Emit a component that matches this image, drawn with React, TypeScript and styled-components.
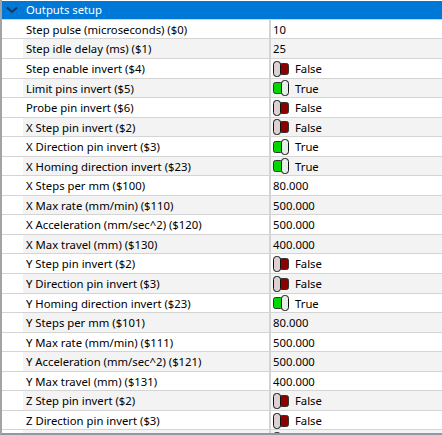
import { FC } from 'react';
import styled, { createGlobalStyle } from 'styled-components';

const GlobalStyle = createGlobalStyle`
  html, body {
    margin: 0;
    padding: 0;
    background: #fff;
  }
`;

const Frame = styled.div`
  box-sizing: border-box;
  width: 442px;
  height: 435px;
  padding-top: 1px;
  overflow: hidden;
  background: #fff;
  border-left: 2px solid #a3a3a3;
  border-bottom: 2px solid #8f98a3;
  font-family: 'Noto Sans', 'Open Sans', sans-serif;
  font-size: 11.3px;
  color: #000;
`;

const Viewport = styled.div`
  height: 432px;
  overflow: hidden;
`;

const Header = styled.div`
  display: flex;
  align-items: center;
  height: 17.9px;
  background: #0078d7;
  color: #fff;
  border-bottom: 1px solid #d4d4d4;
`;

const Chevron = styled.svg`
  width: 12px;
  height: 8px;
  margin-left: 4px;
  flex: none;
`;

const HeaderTitle = styled.span`
  margin-left: 8px;
`;

const Row = styled.div<{ $shaded: boolean }>`
  box-sizing: border-box;
  display: grid;
  grid-template-columns: 21px 246px 1fr;
  height: 19.55px;
  border-bottom: 1px solid #d4d4d4;
  line-height: 17.5px;
  background: ${({ $shaded }) =>
    $shaded ? 'linear-gradient(to right, #fff 21px, #f3f3f3 21px)' : '#fff'};
`;

const NameCell = styled.div`
  grid-column: 2;
  padding: 1px 0 0 3px;
  white-space: nowrap;
`;

const ValueCell = styled.div`
  display: flex;
  align-items: center;
  gap: 6px;
  padding: 1px 0 0 2px;
  border-left: 2px solid #d4d4d4;
  white-space: nowrap;
`;

const ToggleBox = styled.svg`
  display: block;
  width: 16px;
  height: 16px;
  flex: none;
`;

const Toggle: FC<{ on: boolean }> = ({ on }) =>
  on ? (
    <ToggleBox viewBox="0 0 16 16">
      <rect x="0.5" y="2.5" width="9" height="11" rx="2" fill="#00d800" stroke="#333" />
      <rect x="8.5" y="0.5" width="7" height="15" rx="3" fill="#e6efe6" stroke="#111" />
    </ToggleBox>
  ) : (
    <ToggleBox viewBox="0 0 16 16">
      <rect x="6.5" y="2.5" width="9" height="11" rx="2" fill="#8c0000" stroke="#333" />
      <rect x="0.5" y="0.5" width="7" height="15" rx="3" fill="#dcd2d2" stroke="#111" />
    </ToggleBox>
  );

const settings: [string, string | boolean][] = [
  ['Step pulse (microseconds) ($0)', '10'],
  ['Step idle delay (ms) ($1)', '25'],
  ['Step enable invert ($4)', false],
  ['Limit pins invert ($5)', true],
  ['Probe pin invert ($6)', false],
  ['X Step pin invert ($2)', false],
  ['X Direction pin invert ($3)', true],
  ['X Homing direction invert ($23)', true],
  ['X Steps per mm ($100)', '80.000'],
  ['X Max rate (mm/min) ($110)', '500.000'],
  ['X Acceleration (mm/sec^2) ($120)', '500.000'],
  ['X Max travel (mm) ($130)', '400.000'],
  ['Y Step pin invert ($2)', false],
  ['Y Direction pin invert ($3)', false],
  ['Y Homing direction invert ($23)', true],
  ['Y Steps per mm ($101)', '80.000'],
  ['Y Max rate (mm/min) ($111)', '500.000'],
  ['Y Acceleration (mm/sec^2) ($121)', '500.000'],
  ['Y Max travel (mm) ($131)', '400.000'],
  ['Z Step pin invert ($2)', false],
  ['Z Direction pin invert ($3)', false]
];

export default function App() {
  return (
    <>
      <GlobalStyle />
      <Frame>
        <Viewport>
          <Header>
            <Chevron viewBox="0 0 12 8">
              <path d="M1 1.5 L6 6 L11 1.5" fill="none" stroke="#12395c" strokeWidth="2" />
            </Chevron>
            <HeaderTitle>Outputs setup</HeaderTitle>
          </Header>
          {settings.map(([name, value], i) => (
            <Row key={name} $shaded={i % 2 === 1}>
              <NameCell>{name}</NameCell>
              <ValueCell>
                {typeof value === 'boolean' ? (
                  <>
                    <Toggle on={value} />
                    {value ? 'True' : 'False'}
                  </>
                ) : (
                  value
                )}
              </ValueCell>
            </Row>
          ))}
          <Row $shaded>
            <NameCell />
            <ValueCell>
              <Toggle on={false} />
            </ValueCell>
          </Row>
        </Viewport>
      </Frame>
    </>
  );
}
